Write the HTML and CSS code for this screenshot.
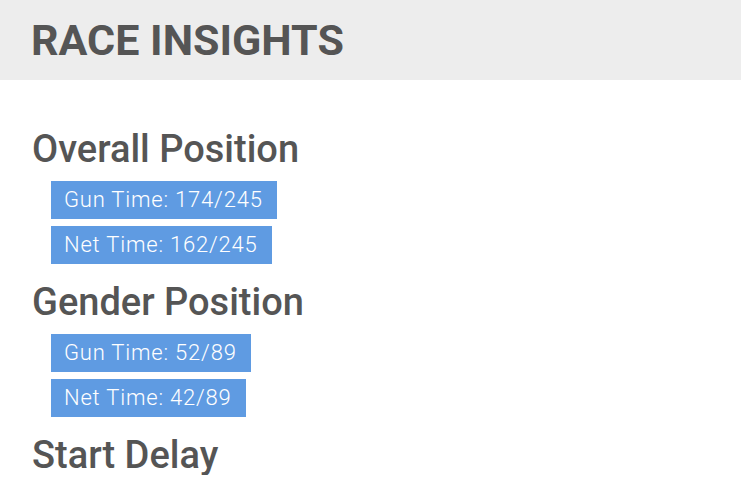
FILE: index.html
```html
<!DOCTYPE html>
<html>
<head>
<meta charset="utf-8">
<link rel="stylesheet" href="styles.css">
</head>
<body>
<header class="top">
  <h1 class="title">RACE INSIGHTS</h1>
</header>
<main class="content">
  <section class="group">
    <h2 class="heading">Overall Position</h2>
    <div class="badges">
      <span class="badge">Gun Time: 174/245</span>
      <span class="badge">Net Time: 162/245</span>
    </div>
  </section>
  <section class="group">
    <h2 class="heading">Gender Position</h2>
    <div class="badges">
      <span class="badge">Gun Time: 52/89</span>
      <span class="badge">Net Time: 42/89</span>
    </div>
  </section>
  <section class="group">
    <h2 class="heading">Start Delay</h2>
  </section>
</main>
</body>
</html>
```

FILE: styles.css
```css
html, body {
  margin: 0;
  padding: 0;
  background: #ffffff;
  font-family: Roboto, "Liberation Sans", sans-serif;
  color: #555555;
}
.top {
  height: 80px;
  background: #ededed;
  display: flex;
  align-items: center;
  padding-left: 31px;
}
.title {
  margin: 0;
  font-size: 43px;
  font-weight: 700;
  line-height: 49px;
  color: #555555;
}
.content {
  padding: 49px 0 0 32px;
  display: flex;
  flex-direction: column;
  gap: 18px;
}
.heading {
  margin: 0;
  font-size: 38px;
  font-weight: 500;
  line-height: 40px;
  color: #555555;
}
.badges {
  margin-top: 12px;
  padding-left: 19px;
  display: flex;
  flex-direction: column;
  align-items: flex-start;
  gap: 7px;
}
.badge {
  display: block;
  height: 38px;
  line-height: 38px;
  padding: 0 14px 0 13px;
  background: #5f9be2;
  color: #ffffff;
  font-size: 22px;
  font-weight: 300;
  letter-spacing: 0.8px;
}
```
